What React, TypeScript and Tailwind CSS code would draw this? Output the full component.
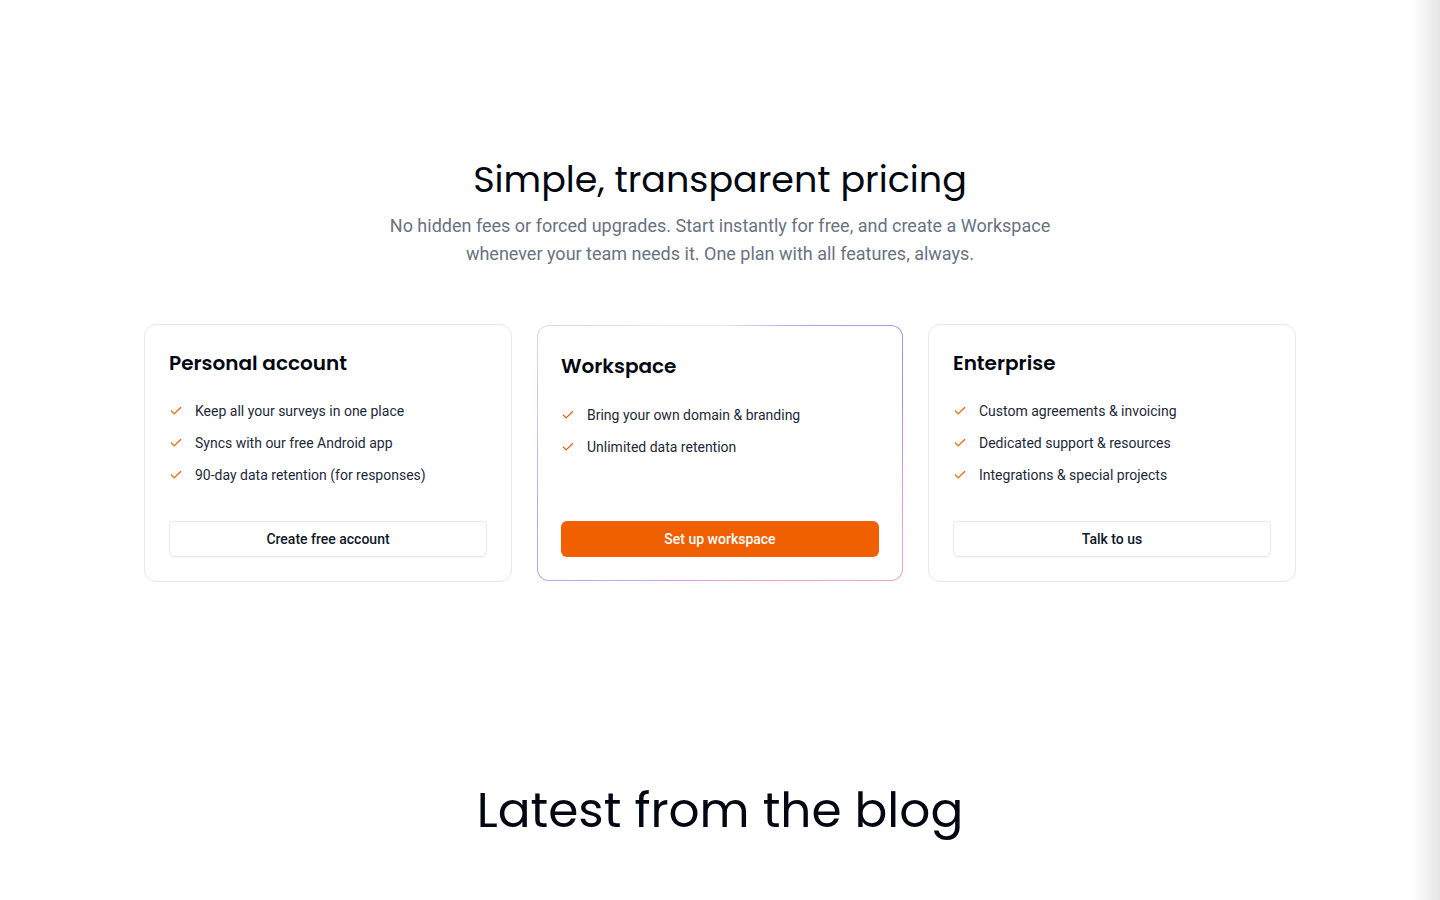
import React from 'react';
import { Check } from 'lucide-react';

interface Plan {
  name: string;
  features: string[];
  cta: string;
  featured?: boolean;
}

const plans: Plan[] = [
  {
    name: 'Personal account',
    features: ['Keep all your surveys in one place', 'Syncs with our free Android app', '90-day data retention (for responses)'],
    cta: 'Create free account',
  },
  {
    name: 'Workspace',
    features: ['Bring your own domain & branding', 'Unlimited data retention'],
    cta: 'Set up workspace',
    featured: true,
  },
  {
    name: 'Enterprise',
    features: ['Custom agreements & invoicing', 'Dedicated support & resources', 'Integrations & special projects'],
    cta: 'Talk to us',
  },
];

const headingFont = { fontFamily: '"Poppins", Inter, "Noto Sans", sans-serif' };

const FeatureList: React.FC<{ items: string[]; featured?: boolean }> = ({ items, featured }) => (
  <ul className={`space-y-3 ${featured ? 'mt-[25px]' : 'mt-6'}`}>
    {items.map((f) => (
      <li key={f} className="flex items-center gap-3 text-sm leading-5 text-gray-800">
        <Check className="h-[14px] w-[14px] shrink-0 text-[#ea580c]" strokeWidth={1.9} />
        {f}
      </li>
    ))}
  </ul>
);

const PlanCard: React.FC<{ plan: Plan }> = ({ plan }) => {
  if (plan.featured) {
    return (
      <div
        className="m-px flex rounded-xl p-px"
        style={{
          background:
            'conic-gradient(from 0deg at 50% 50%, #e9e7ef 0deg, #b99cf2 35deg, #a78bfa 70deg, #e7a3d8 115deg, #f4a3c0 160deg, #c8a2ee 205deg, #b8a6f2 250deg, #d9d2f3 300deg, #e9e7ef 340deg)',
        }}
      >
        <div className="flex flex-1 flex-col rounded-[11px] bg-white px-[23px] pb-[23px] pt-[26px]">
          <h3 className="text-xl font-semibold leading-7 text-gray-950" style={headingFont}>{plan.name}</h3>
          <FeatureList items={plan.features} featured />
          <button className="mt-auto h-9 w-full rounded-md bg-[#f06000] text-sm font-medium text-white">
            {plan.cta}
          </button>
        </div>
      </div>
    );
  }
  return (
    <div className="flex flex-col rounded-xl border border-gray-200 bg-white p-6">
      <h3 className="text-xl font-semibold leading-7 text-gray-950" style={headingFont}>{plan.name}</h3>
      <FeatureList items={plan.features} />
      <button className="mt-9 h-9 w-full rounded-md border border-gray-200 bg-white text-sm font-medium text-gray-900 shadow-[0_1px_2px_rgba(0,0,0,0.04)]">
        {plan.cta}
      </button>
    </div>
  );
};

export default function App() {
  return (
    <div className="min-h-[900px] overflow-hidden bg-white" style={{ fontFamily: 'Roboto, "Liberation Sans", sans-serif' }}>
      <section className="mx-auto max-w-6xl pt-[157px]">
        <h2 className="text-center text-[36.5px] font-normal leading-[46px] text-gray-950" style={headingFont}>
          Simple, transparent pricing
        </h2>
        <p className="mx-auto mt-[9px] max-w-[680px] text-center text-lg leading-7 text-gray-500">
          No hidden fees or forced upgrades. Start instantly for free, and create a Workspace whenever your team needs it. One plan with all features, always.
        </p>
        <div className="mt-[56px] grid grid-cols-3 gap-6">
          {plans.map((p) => (
            <PlanCard key={p.name} plan={p} />
          ))}
        </div>
      </section>

      <section className="pt-[204px]">
        <h2 className="text-center text-[48.6px] font-normal leading-none text-gray-950" style={headingFont}>
          Latest from the blog
        </h2>
      </section>

      <div className="pointer-events-none fixed right-0 top-0 h-full w-7 bg-gradient-to-r from-transparent to-black/10" />
    </div>
  );
}
